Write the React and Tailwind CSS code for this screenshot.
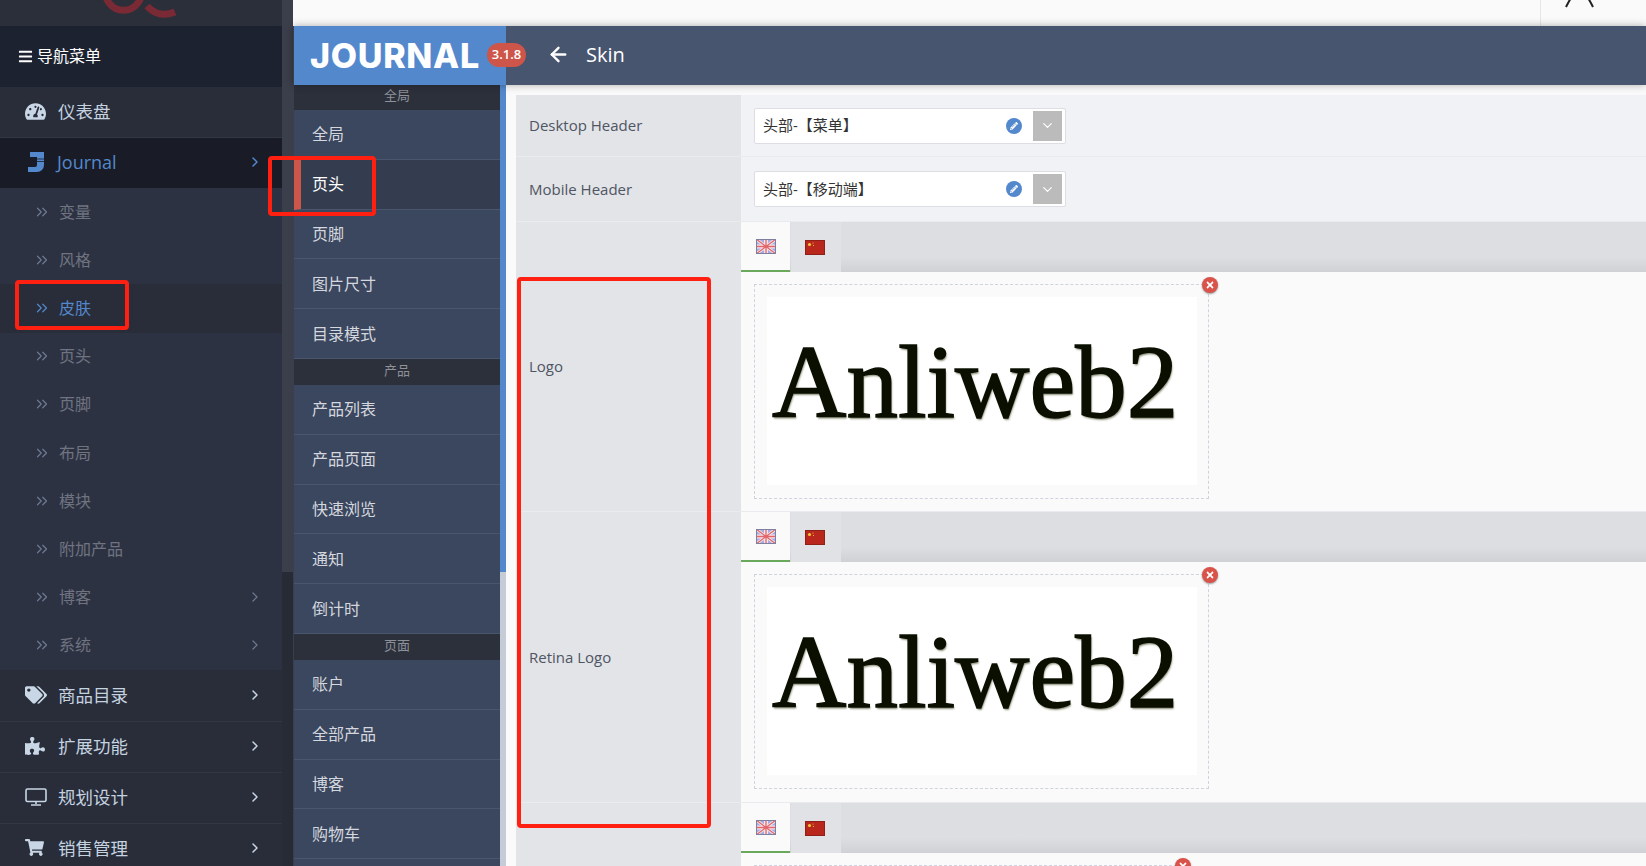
import {
  FaBars,
  FaTachometerAlt,
  FaTags,
  FaPuzzlePiece,
  FaShoppingCart,
  FaPencilAlt,
  FaTimes,
} from "react-icons/fa";
import { ArrowLeft, ChevronDown, ChevronRight, ChevronsRight } from "lucide-react";

const subMenu = [
  { name: "变量" },
  { name: "风格" },
  { name: "皮肤", active: true },
  { name: "页头" },
  { name: "页脚" },
  { name: "布局" },
  { name: "模块" },
  { name: "附加产品" },
  { name: "博客", more: true },
  { name: "系统", more: true },
];

const groups = [
  { title: "全局", head: "h-[25px] pb-[3px]", items: ["全局", "页头", "页脚", "图片尺寸", "目录模式"] },
  { title: "产品", head: "h-[26px] pb-[2px]", items: ["产品列表", "产品页面", "快速浏览", "通知", "倒计时"] },
  { title: "页面", head: "h-[26px] pb-[2px]", items: ["账户", "全部产品", "博客", "购物车"] },
];

function JournalIcon() {
  return (
    <svg width="16" height="22" viewBox="0 0 16 22" className="shrink-0">
      <path d="M2 1h14v13a7 7 0 0 1-7 7H0v-5h7a2 2 0 0 0 2-2V6H2z" fill="#5488cd" />
      <path d="M9 8h7M9 10.500h7" stroke="#191c26" strokeWidth="0.8" />
    </svg>
  );
}

function MonitorIcon() {
  return (
    <svg width="22" height="18" viewBox="0 0 22 18" className="shrink-0">
      <rect x="1" y="1" width="20" height="12.500" rx="1.500" fill="none" stroke="#c8d6e5" strokeWidth="1.600" />
      <path d="M11 14v2M6 17h10" stroke="#c8d6e5" strokeWidth="1.600" />
    </svg>
  );
}

function UkFlag() {
  return (
    <svg width="20" height="15" viewBox="0 0 20 15" className="shrink-0">
      <rect width="20" height="15" fill="#a4abe0" />
      <path d="M0 0l20 15M20 0L0 15" stroke="#f4e6ea" strokeWidth="3" />
      <path d="M10 0v15M0 7.500h20" stroke="#f4e6ea" strokeWidth="4" />
      <path d="M10 0v15M0 7.500h20M0 0l20 15M20 0L0 15" stroke="#e2666a" strokeWidth="1.300" />
      <rect x="0.500" y="0.500" width="19" height="14" fill="none" stroke="#7f7f9f" />
    </svg>
  );
}

function CnFlag() {
  return (
    <svg width="20" height="15" viewBox="0 0 20 15" className="shrink-0">
      <rect width="20" height="15" fill="#b9261c" />
      <circle cx="4.500" cy="4.500" r="1.600" fill="#f2c53d" />
      <circle cx="8" cy="3" r="0.600" fill="#f2c53d" />
      <circle cx="8.500" cy="5.500" r="0.600" fill="#f2c53d" />
      <rect x="0.500" y="0.500" width="19" height="14" fill="none" stroke="#8f2018" />
    </svg>
  );
}

function TopItem({ icon, label, arrow = true }) {
  return (
    <div className="h-[51px] shrink-0 flex items-center pl-[25px] pr-[19px] pb-[2px] border-b border-[#323744] bg-[#282d39] text-[#c5d2e0]">
      <span className="w-[33px] shrink-0">{icon}</span>
      <span className="flex-1 text-[17.500px]">{label}</span>
      {arrow && <ChevronRight size={16} strokeWidth={2.200} className="text-[#c8d6e5]" />}
    </div>
  );
}

function Sidebar() {
  return (
    <aside className="w-[282px] shrink-0 flex flex-col overflow-hidden bg-[#282d39]">
      <div className="h-[26px] shrink-0 bg-[#2a2f3a] pl-[103px] overflow-hidden">
        <svg width="80" height="26" viewBox="0 0 80 26">
          <path d="M3-12a18 18 0 1 0 35 0M44 6c8 9 18 10 28 6" fill="none" stroke="#7a2a35" strokeWidth="7" />
        </svg>
      </div>
      <div className="h-[61px] shrink-0 bg-[#1c2230] flex items-center gap-[4px] pl-[18px] pb-[1px] text-white text-[16px]">
        <FaBars className="text-[15px]" />
        <span>导航菜单</span>
      </div>
      <TopItem icon={<FaTachometerAlt className="text-[21px] text-[#c8d6e5]" />} label="仪表盘" arrow={false} />
      <div className="h-[50px] shrink-0 flex items-center pl-[28px] pr-[19px] pb-[2px] bg-[#191c26] text-[#5488cd]">
        <span className="w-[29px]"><JournalIcon /></span>
        <span className="flex-1 text-[18px]">Journal</span>
        <ChevronRight size={16} strokeWidth={2.200} />
      </div>
      <div className="shrink-0 bg-[#2d3243] border-b border-[#282d39]">
        {subMenu.map((item) => (
          <div
            key={item.name}
            className={`h-[48.200px] flex items-center pl-[33px] pr-[19px] pb-[1px] text-[16px] ${
              item.active ? "bg-[#282d39] text-[#5488cd]" : "text-[#6f7480]"
            }`}
          >
            <ChevronsRight size={18} strokeWidth={1.600} className={`mr-[8px] shrink-0 ${item.active ? "text-[#5488cd]" : "text-[#6c7a90]"}`} />
            <span className="flex-1">{item.name}</span>
            {item.more && <ChevronRight size={16} strokeWidth={1.800} className="text-[#6f7c90]" />}
          </div>
        ))}
      </div>
      <TopItem icon={<FaTags className="text-[22px] text-[#c8d6e5]" />} label="商品目录" />
      <TopItem icon={<FaPuzzlePiece className="text-[20px] text-[#c8d6e5]" />} label="扩展功能" />
      <TopItem icon={<MonitorIcon />} label="规划设计" />
      <TopItem icon={<FaShoppingCart className="text-[19px] text-[#c8d6e5]" />} label="销售管理" />
    </aside>
  );
}

function SubMenu() {
  return (
    <nav className="w-[206px] shrink-0 bg-[#3b465f]">
      {groups.map((group) => (
        <div key={group.title}>
          <div className={`${group.head} flex items-center justify-center bg-[#2c303b] text-[13px] text-[#8d9199]`}>{group.title}</div>
          {group.items.map((item, i) => {
            const active = group.title === "全局" && i === 1;
            return (
              <div
                key={item}
                className={`h-[49.800px] flex items-center text-[16px] border-b border-[#4a556e] ${
                  active ? "bg-[#343c50] text-white border-l-[7px] border-l-[#cd5549] pl-[11px]" : "text-[#d4d8de] pl-[18px]"
                }`}
              >
                {item}
              </div>
            );
          })}
        </div>
      ))}
    </nav>
  );
}

function SelectRow({ label, value, height }) {
  return (
    <div className={`flex border-b border-[#e9ebef] ${height}`}>
      <div className="w-[225px] shrink-0 bg-[#e2e4e8] flex items-center pl-[13px] text-[15px] text-[#4f5563]">{label}</div>
      <div className="flex-1 bg-[#f0f2f6] flex items-center pl-[13px]">
        <div className="w-[312px] h-[36px] bg-white border border-[#dcdee3] rounded-[2px] flex items-center pl-[8px] pr-[3px] text-[15px] text-[#333]">
          <span className="flex-1">{value}</span>
          <span className="w-[16px] h-[16px] rounded-full bg-[#5488cd] flex items-center justify-center text-white mr-[11px]">
            <FaPencilAlt className="text-[8px]" />
          </span>
          <span className="w-[29px] h-[30px] bg-[#bbbbbb] flex items-center justify-center text-white">
            <ChevronDown size={15} strokeWidth={2} />
          </span>
        </div>
      </div>
    </div>
  );
}

function Tabs() {
  return (
    <div className="h-[50px] flex bg-gradient-to-b from-[#dddee2] from-70% to-[#d0d1d5]">
      <div className="w-[49px] bg-[#fafafa] border-b-2 border-[#6aa85c] flex items-center justify-center">
        <UkFlag />
      </div>
      <div className="w-[50px] ml-px bg-[#e0e2e5] flex items-center justify-center pr-[2px]">
        <CnFlag />
      </div>
    </div>
  );
}

function DeleteButton() {
  return (
    <span className="absolute -top-[8px] -right-[10px] w-[16px] h-[16px] rounded-full bg-[#d9534a] shadow-[0_1px_2px_rgba(0,0,0,.4)] flex items-center justify-center text-white">
      <FaTimes className="text-[10px]" />
    </span>
  );
}

function LogoRow({ label, height }) {
  return (
    <div className={`flex border-b border-[#e9ebef] ${height}`}>
      <div className="w-[225px] shrink-0 bg-[#e2e4e8] flex items-center pl-[13px] text-[15px] text-[#4f5563]">{label}</div>
      <div className="flex-1 bg-[#fafafa]">
        <Tabs />
        <div className="pt-[12px] pl-[13px]">
          <div className="relative w-[455px] h-[215px] border border-dashed border-[#cfd3dd] p-[12px]">
            <DeleteButton />
            <div className="h-[188px] w-[430px] bg-white pl-[5px] pt-[25px] font-['Liberation_Serif',serif] text-[103px] leading-[120px] text-[#0a0f00] [-webkit-text-stroke:1.500px_#0a0f00] [text-shadow:1px_2px_2px_#8b8f78]">
              Anliweb2
            </div>
          </div>
        </div>
      </div>
    </div>
  );
}

function Annotation({ className }) {
  return <div className={`absolute border-[4px] border-[#ff2011] rounded-[4px] pointer-events-none z-20 ${className}`} />;
}

export default function App() {
  return (
    <div className="relative h-[866px] w-[1646px] overflow-hidden flex bg-white font-['Open_Sans','Noto_Sans_CJK_SC',sans-serif]">
      <Sidebar />

      {/* scrollbar */}
      <div className="w-[11px] shrink-0 flex flex-col">
        <div className="h-[572px] bg-[#3b3f4b]" />
        <div className="flex-1 bg-[#262b36]" />
      </div>

      <main className="flex-1 min-w-0 flex flex-col bg-[#fafafa]">
        <div className="h-[26px] shrink-0 bg-[#fafafa] flex justify-end">
          <div className="w-[106px] border-l border-[#e6e6e6] pl-[22px] overflow-hidden">
            <svg width="32" height="8" viewBox="0 0 32 8">
              <path d="M3 7C5 3 6 1 8 -2M25 -2C27 1 28 3 30 7" fill="none" stroke="#222" strokeWidth="2" />
            </svg>
          </div>
        </div>

        <header className="relative z-10 h-[59px] shrink-0 flex border-l border-[#3b3f4b] bg-[#47556f] text-white shadow-[0_0_8px_rgba(0,0,0,.3)]">
          <div className="relative w-[212px] shrink-0 bg-[#5488cd] flex items-center pl-[16px] font-['Inter',sans-serif] text-[34px] font-extrabold tracking-[0.700px]">
            JOURNAL
            <span className="absolute left-[193px] top-[17px] w-[39px] h-[24px] rounded-full bg-[#cd5549] flex items-center justify-center text-[13px] font-semibold tracking-normal font-['Open_Sans',sans-serif]">
              3.1.8
            </span>
          </div>
          <div className="flex items-center pl-[41px] gap-[16px] text-[20px] pb-[2px]">
            <ArrowLeft size={23} strokeWidth={2.500} />
            <span>Skin</span>
          </div>
        </header>

        <div className="flex-1 min-h-0 flex border-l border-[#3b3f4b]">
          <SubMenu />
          <div className="w-[6px] shrink-0 flex flex-col">
            <div className="h-[487px] bg-[#5488cd]" />
            <div className="flex-1 bg-[#c5ccd5]" />
          </div>
          <div className="flex-1 min-w-0 pt-[10px] pl-[10px]">
            <SelectRow label="Desktop Header" value="头部-【菜单】" height="h-[62px]" />
            <SelectRow label="Mobile Header" value="头部-【移动端】" height="h-[65px]" />
            <LogoRow label="Logo" height="h-[290px]" />
            <LogoRow label="Retina Logo" height="h-[291px]" />
            <div className="flex h-[70px]">
              <div className="w-[225px] shrink-0 bg-[#e2e4e8]" />
              <div className="flex-1 bg-[#fafafa]">
                <Tabs />
                <div className="pt-[12px] pl-[13px]">
                  <div className="relative w-[428px] h-[60px] border border-dashed border-[#cfd3dd]">
                    <DeleteButton />
                  </div>
                </div>
              </div>
            </div>
          </div>
        </div>
      </main>

      {/* red marks drawn over the screenshot */}
      <Annotation className="left-[15px] top-[280px] w-[114px] h-[50px]" />
      <Annotation className="left-[268px] top-[156px] w-[108px] h-[60px]" />
      <Annotation className="left-[517px] top-[277px] w-[194px] h-[551px]" />
    </div>
  );
}
